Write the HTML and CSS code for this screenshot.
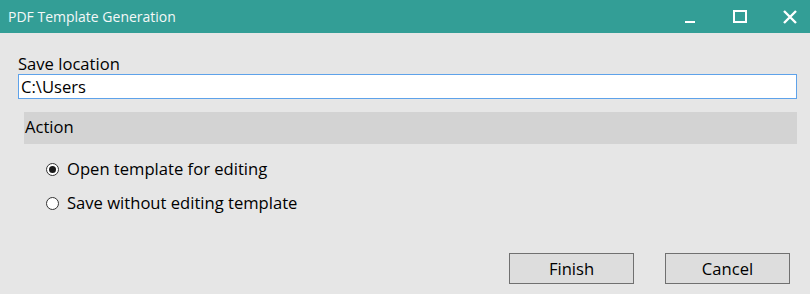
FILE: index.html
```html
<!DOCTYPE html>
<html>
<head>
<meta charset="utf-8">
<link rel="stylesheet" href="styles.css">
</head>
<body>
<div class="window">
  <div class="titlebar">
    <span class="title">PDF Template Generation</span>
    <div class="controls">
      <span class="ctl"><svg width="12" height="12" viewBox="0 0 12 12"><rect x="1" y="10" width="10" height="2" fill="#fff"/></svg></span>
      <span class="ctl"><svg width="14" height="13" viewBox="0 0 14 13"><rect x="1" y="1" width="12" height="11" fill="none" stroke="#fff" stroke-width="2"/></svg></span>
      <span class="ctl"><svg width="14" height="14" viewBox="0 0 14 14"><path d="M1 1 L13 13 M13 1 L1 13" stroke="#fff" stroke-width="2.4"/></svg></span>
    </div>
  </div>
  <div class="content">
    <label class="label">Save location</label>
    <div class="input">C:\Users</div>
    <div class="group-header">Action</div>
    <div class="radios">
      <div class="radio-row"><span class="radio checked"></span><span>Open template for editing</span></div>
      <div class="radio-row"><span class="radio"></span><span>Save without editing template</span></div>
    </div>
    <div class="buttons">
      <button class="btn">Finish</button>
      <button class="btn">Cancel</button>
    </div>
  </div>
</div>
</body>
</html>
```
FILE: styles.css
```css
html, body {
  margin: 0;
  padding: 0;
  background: #e6e6e6;
  width: 810px;
  height: 294px;
  overflow: hidden;
}
.window {
  font-family: "Open Sans", "Noto Sans", sans-serif;
  color: #000;
}
.titlebar {
  height: 33px;
  background: #339e96;
  display: flex;
  align-items: center;
  justify-content: space-between;
}
.title {
  color: #f4f8f8;
  font-size: 14px;
  padding-left: 8px;
}
.controls {
  display: flex;
  align-items: center;
  gap: 36px;
  padding-right: 13px;
}
.ctl {
  display: flex;
  width: 14px;
  justify-content: center;
}
.content {
  padding: 21px 13px 0 18px;
}
.label {
  display: block;
  font-size: 16.6px;
  line-height: 20px;
}
.input {
  height: 23px;
  border: 1px solid #5ea2ea;
  background: #fff;
  font-size: 16.6px;
  line-height: 23px;
  padding-left: 2px;
}
.group-header {
  margin: 13px 0 0 6px;
  height: 32px;
  background: #d3d3d3;
  font-size: 16.6px;
  line-height: 29px;
  padding-left: 1px;
}
.radios {
  padding: 13px 0 0 28px;
  display: flex;
  flex-direction: column;
  gap: 10px;
}
.radio-row {
  display: flex;
  align-items: center;
  gap: 8px;
  font-size: 16.6px;
  line-height: 24px;
}
.radio {
  width: 11px;
  height: 11px;
  border: 1px solid #333;
  border-radius: 50%;
  background: #fff;
  position: relative;
}
.radio.checked::after {
  content: "";
  position: absolute;
  left: 2px;
  top: 2px;
  width: 7px;
  height: 7px;
  border-radius: 50%;
  background: #1a1a1a;
}
.buttons {
  display: flex;
  justify-content: flex-end;
  gap: 31px;
  margin-top: 38px;
  padding-right: 7px;
}
.btn {
  width: 125px;
  height: 31px;
  border: 1px solid #707070;
  background: #dddddd;
  font-family: "Open Sans", "Noto Sans", sans-serif;
  font-size: 16.6px;
  color: #000;
  padding: 0;
}
```
